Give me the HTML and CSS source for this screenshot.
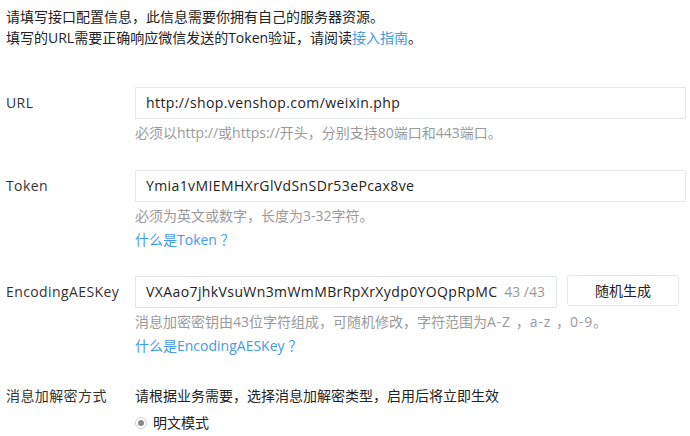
FILE: index.html
```html
<!DOCTYPE html>
<html lang="zh">
<head>
<meta charset="utf-8">
<link rel="stylesheet" href="styles.css">
</head>
<body>
<div class="page">
  <div class="intro">
    <p>请填写接口配置信息，此信息需要你拥有自己的服务器资源。</p>
    <p>填写的URL需要正确响应微信发送的Token验证，请阅读<a class="link">接入指南</a>。</p>
  </div>

  <div class="row row-url">
    <div class="label">URL</div>
    <div class="field">
      <div class="input"><span class="val">http://shop.venshop.com/weixin.php</span></div>
      <p class="hint">必须以http://或https://开头，分别支持80端口和443端口。</p>
    </div>
  </div>

  <div class="row row-token">
    <div class="label">Token</div>
    <div class="field">
      <div class="input"><span class="val">Ymia1vMIEMHXrGlVdSnSDr53ePcax8ve</span></div>
      <p class="hint">必须为英文或数字，长度为3-32字符。</p>
      <p class="hint"><a class="link">什么是Token ？</a></p>
    </div>
  </div>

  <div class="row row-aes">
    <div class="label">EncodingAESKey</div>
    <div class="field">
      <div class="aes-line">
        <div class="input input-aes"><span class="val">VXAao7jhkVsuWn3mWmMBrRpXrXydp0YOQpRpMC</span><span class="count">43 /43</span></div>
        <div class="btn">随机生成</div>
      </div>
      <p class="hint">消息加密密钥由43位字符组成，可随机修改，字符范围为<span class="latin">A-Z</span>，<span class="latin">a-z</span>，<span class="latin last">0-9</span>。</p>
      <p class="hint"><a class="link">什么是EncodingAESKey ？</a></p>
    </div>
  </div>

  <div class="row row-mode">
    <div class="label">消息加解密方式</div>
    <div class="field">
      <p class="desc">请根据业务需要，选择消息加解密类型，启用后将立即生效</p>
      <div class="radio-line"><span class="radio"></span><span>明文模式</span></div>
    </div>
  </div>
</div>
</body>
</html>
```
FILE: styles.css
```css
* { box-sizing: border-box; }
html, body { margin: 0; padding: 0; background: #fff; }
body {
  font-family: "Open Sans", "Noto Sans CJK SC", sans-serif;
  font-size: 14px;
  color: #222;
  overflow: hidden;
}
p { margin: 0; }
.page { padding: 6px 4px 0 6px; }
.intro p { line-height: 21px; }
.link { color: #459ae9; text-decoration: none; }

.row { display: flex; align-items: flex-start; }
.label { width: 129px; flex: none; line-height: 32px; color: #333; letter-spacing: 0.4px; }
.field { flex: 1; }
.row-url { margin-top: 39px; }
.row-token { margin-top: 25px; }
.row-aes { margin-top: 24px; }
.row-mode { margin-top: 26px; }

.input {
  height: 32px;
  border: 1px solid #e4e8eb;
  padding: 0 10px;
  line-height: 30px;
  color: #222;
  width: 551px;
  white-space: nowrap;
  overflow: hidden;
}
.val { letter-spacing: 0.4px; }
.hint { color: #9a9a9a; line-height: 24px; }
.field > .input + .hint,
.aes-line + .hint { margin-top: 2px; }
.latin { letter-spacing: 0.8px; padding-right: 5px; }
.latin.last { padding-right: 0; }

.aes-line { display: flex; gap: 10px; align-items: flex-start; }
.input-aes { width: 422px; display: flex; justify-content: space-between; padding-right: 11px; }
.count { color: #9a9a9a; }
.btn {
  width: 112px; height: 31px;
  margin-top: -1px;
  border: 1px solid #e4e8eb;
  border-radius: 3px;
  text-align: center;
  line-height: 29px;
  color: #222;
}

.row-mode .label { line-height: 24px; }
.desc { line-height: 24px; }
.radio-line { display: flex; align-items: center; gap: 6px; margin-top: 3px; line-height: 24px; }
.radio {
  width: 12px; height: 12px; border-radius: 50%;
  border: 1px solid #d0d0d0;
  display: flex; align-items: center; justify-content: center;
}
.radio::after { content: ""; width: 6px; height: 6px; border-radius: 50%; background: #888; }
```
